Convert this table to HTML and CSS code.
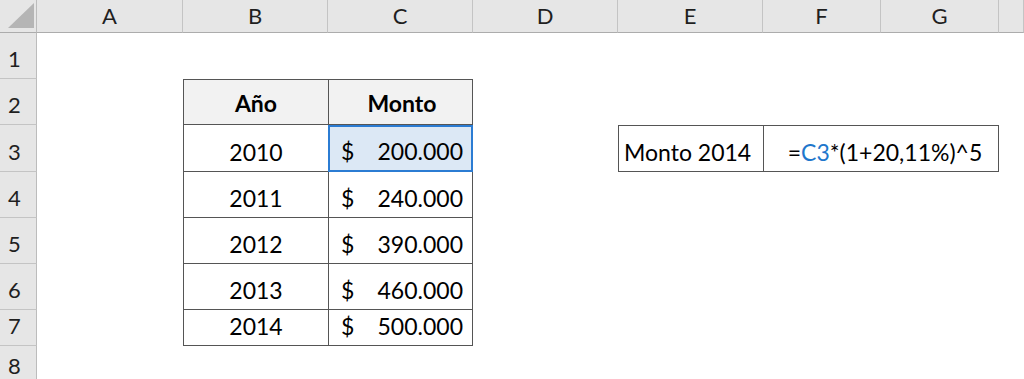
FILE: index.html
```html
<!DOCTYPE html>
<html lang="es">
<head>
<meta charset="utf-8">
<title>Monto</title>
<link rel="stylesheet" href="styles.css">
</head>
<body>
<div class="sheet">
  <div class="corner"><svg width="36" height="32" viewBox="0 0 36 32"><polygon points="8,28 34,3 34,28" fill="#b5b5b5"/></svg></div>
  <div class="ch">A</div><div class="ch">B</div><div class="ch">C</div><div class="ch">D</div><div class="ch">E</div><div class="ch">F</div><div class="ch">G</div><div class="ch"></div>

  <div class="rh">1</div>
  <div class="c"></div><div class="c"></div><div class="c"></div><div class="c"></div><div class="c"></div><div class="c"></div><div class="c"></div><div class="c"></div>

  <div class="rh">2</div>
  <div class="c"></div>
  <div class="c t yr top th">Año</div>
  <div class="c t amt top th center">Monto</div>
  <div class="c"></div><div class="c"></div><div class="c"></div><div class="c"></div><div class="c"></div>

  <div class="rh">3</div>
  <div class="c"></div>
  <div class="c t yr">2010</div>
  <div class="c t amt sel"><span>$</span><span>200.000</span></div>
  <div class="c"></div>
  <div class="c box lbl">Monto 2014</div>
  <div class="c box fx">=<span class="ref">C3</span>*(1+20,11%)^5</div>
  <div class="c"></div>

  <div class="rh">4</div>
  <div class="c"></div>
  <div class="c t yr">2011</div>
  <div class="c t amt"><span>$</span><span>240.000</span></div>
  <div class="c"></div><div class="c"></div><div class="c"></div><div class="c"></div><div class="c"></div>

  <div class="rh">5</div>
  <div class="c"></div>
  <div class="c t yr">2012</div>
  <div class="c t amt"><span>$</span><span>390.000</span></div>
  <div class="c"></div><div class="c"></div><div class="c"></div><div class="c"></div><div class="c"></div>

  <div class="rh">6</div>
  <div class="c"></div>
  <div class="c t yr">2013</div>
  <div class="c t amt"><span>$</span><span>460.000</span></div>
  <div class="c"></div><div class="c"></div><div class="c"></div><div class="c"></div><div class="c"></div>

  <div class="rh">7</div>
  <div class="c"></div>
  <div class="c t yr">2014</div>
  <div class="c t amt"><span>$</span><span>500.000</span></div>
  <div class="c"></div><div class="c"></div><div class="c"></div><div class="c"></div><div class="c"></div>

  <div class="rh last">8</div>
  <div class="c"></div><div class="c"></div><div class="c"></div><div class="c"></div><div class="c"></div><div class="c"></div><div class="c"></div><div class="c"></div>
</div>
</body>
</html>
```

FILE: styles.css
```css
html, body {
  margin: 0;
  padding: 0;
  background: #ffffff;
}

.sheet {
  display: grid;
  grid-template-columns: 37px 146px 145px 145px 145px 145px 118px 118px 1fr;
  grid-template-rows: 33px 46px 46px 47px 46px 46px 46px 36px 33px;
  width: 1024px;
  height: 379px;
  overflow: hidden;
  font-family: Lato, "Open Sans", sans-serif;
  color: #000;
}

.sheet > div {
  box-sizing: border-box;
  min-width: 0;
}

.corner {
  background: #e6e6e6;
  border-right: 1px solid #bcbcbc;
  border-bottom: 1px solid #acacac;
}

.corner svg {
  display: block;
}

.ch {
  background: #e6e6e6;
  border-right: 1px solid #c4c4c4;
  border-bottom: 1px solid #acacac;
  display: flex;
  align-items: flex-end;
  justify-content: center;
  padding-bottom: 5px;
  font-size: 22px;
  line-height: 22px;
  color: #1f1f1f;
}

.rh {
  background: #e6e6e6;
  border-right: 1px solid #bcbcbc;
  border-bottom: 1px solid #c4c4c4;
  display: flex;
  align-items: flex-end;
  padding-left: 8px;
  padding-bottom: 8px;
  font-size: 22px;
  line-height: 22px;
  color: #1f1f1f;
}

.rh.last {
  border-bottom: 0;
  padding-bottom: 2px;
}

.c {
  display: flex;
  align-items: flex-end;
  padding-bottom: 8px;
  font-size: 23px;
  line-height: 22px;
  white-space: nowrap;
}

.t {
  border-left: 1px solid #555;
  border-bottom: 1px solid #555;
}

.top {
  border-top: 1px solid #555;
}

.amt {
  border-right: 1px solid #555;
  justify-content: space-between;
  padding-left: 12px;
  padding-right: 9px;
}

.amt.center {
  justify-content: center;
}

.yr {
  justify-content: center;
}

.th {
  background: #f2f2f2;
  font-weight: 700;
  padding-bottom: 10px;
}

.sel {
  background: #dce8f5;
  border: 2px solid #2b7cd3;
  padding-left: 11px;
  padding-right: 8px;
}

.box {
  border-top: 1px solid #555;
  border-bottom: 1px solid #555;
  border-left: 1px solid #555;
}

.lbl {
  padding-left: 5px;
}

.fx {
  grid-column: span 2;
  border-right: 1px solid #555;
  justify-content: center;
  padding-left: 8px;
}

.ref {
  color: #1f77cc;
}
```
